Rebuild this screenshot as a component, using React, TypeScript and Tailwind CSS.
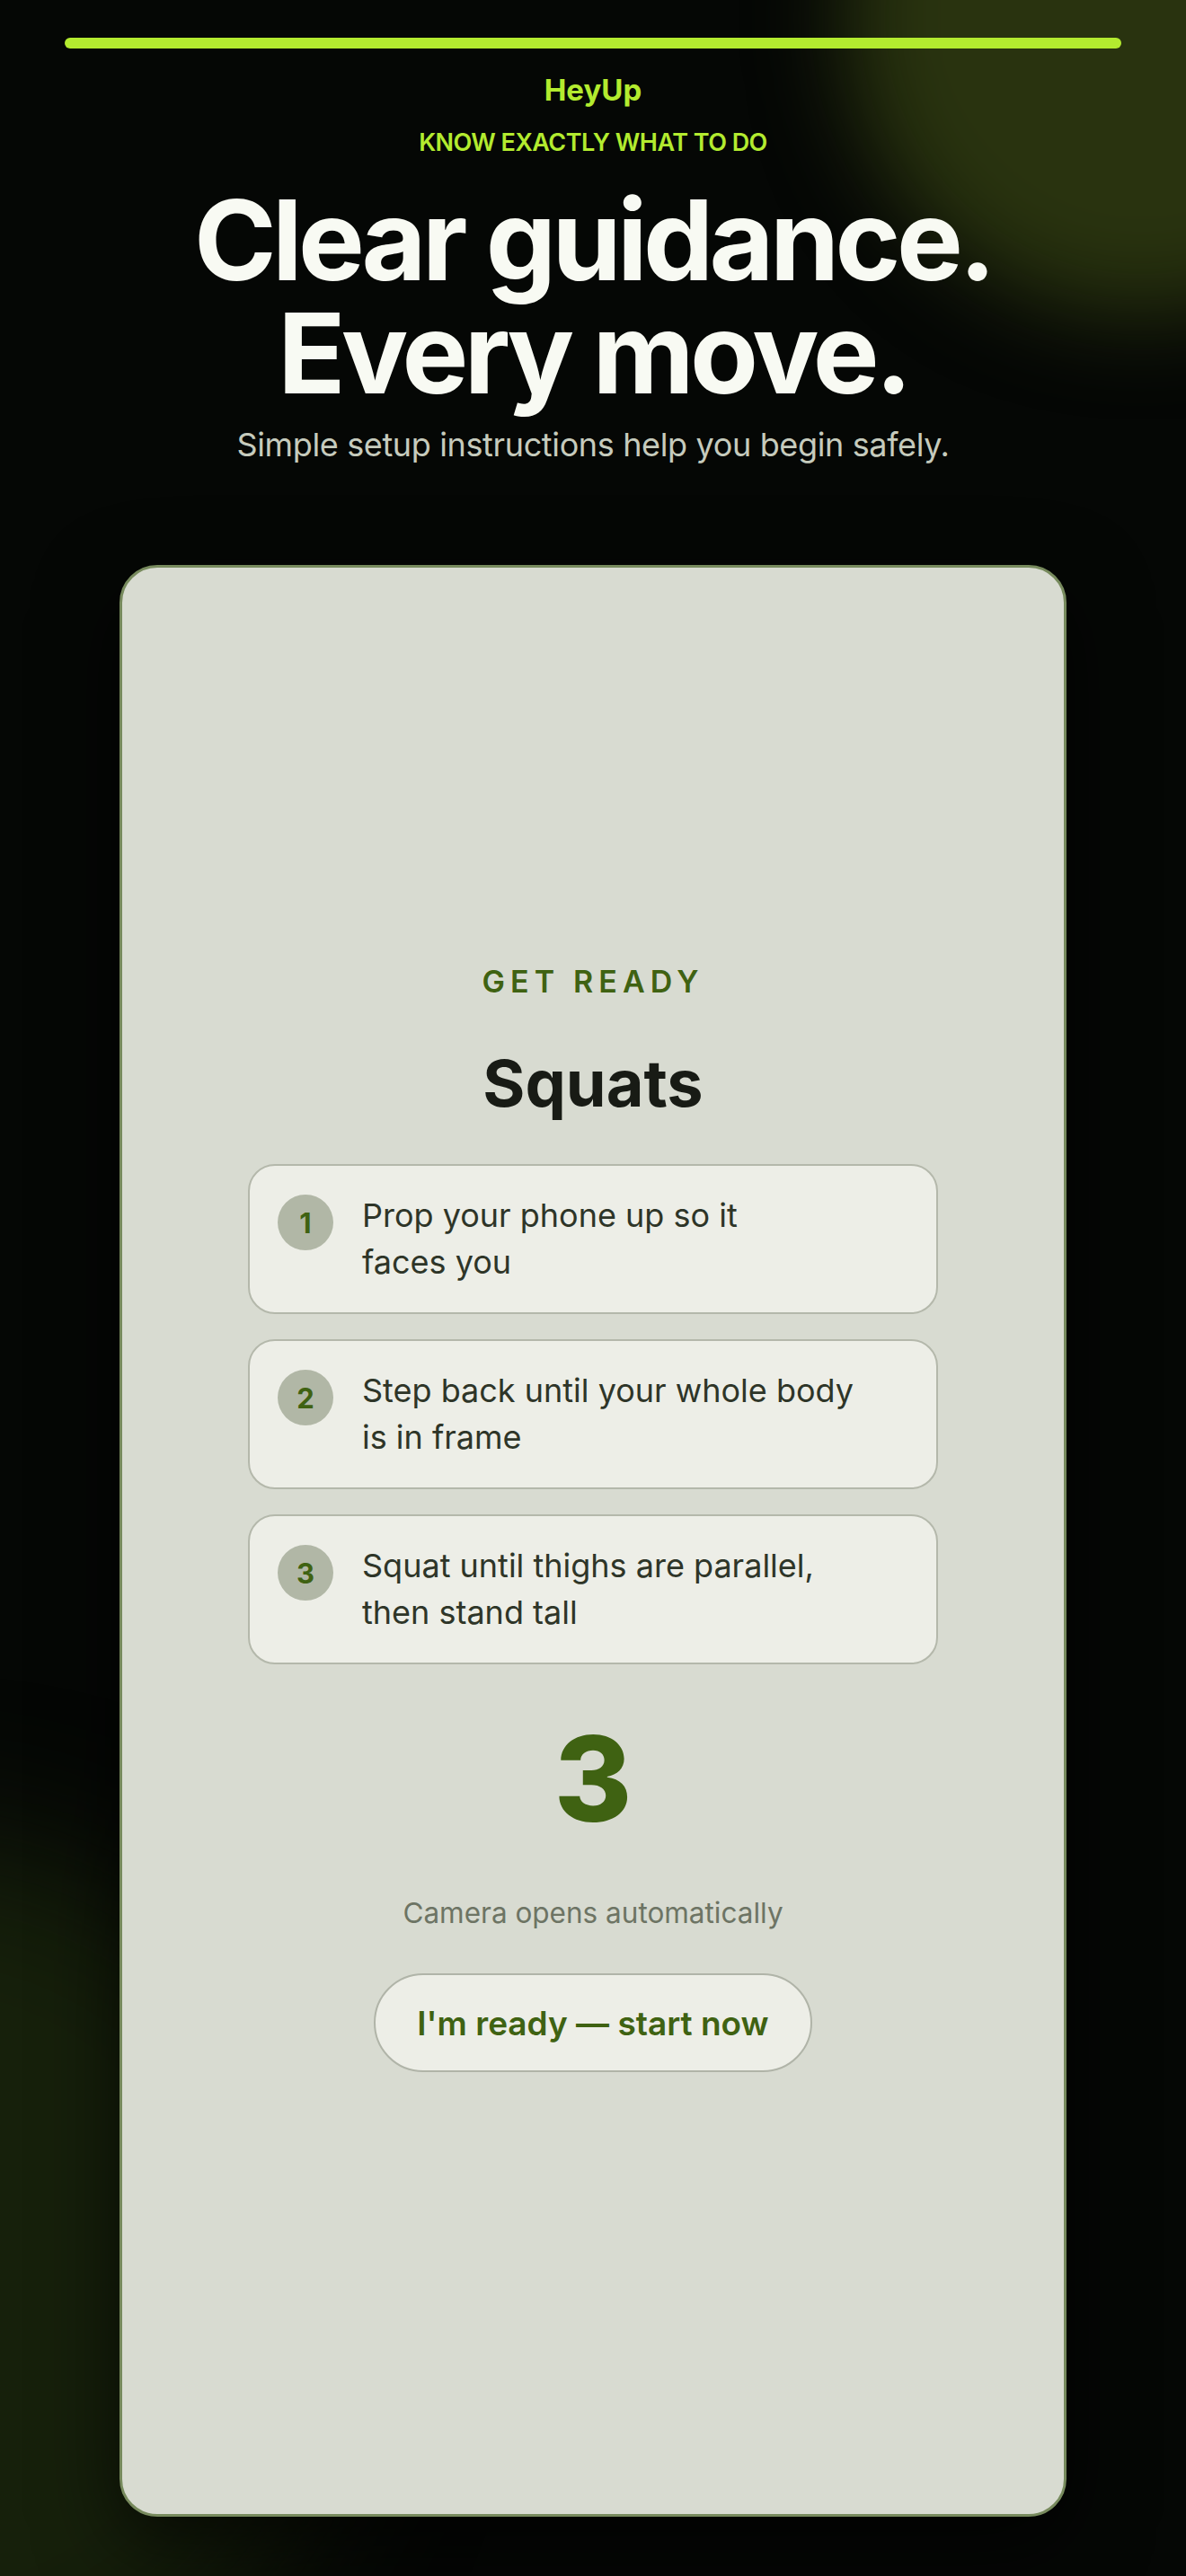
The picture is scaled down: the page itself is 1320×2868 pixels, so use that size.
import React from 'react';

const steps = [
  ['Prop your phone up so it', 'faces you'],
  ['Step back until your whole body', 'is in frame'],
  ['Squat until thighs are parallel,', 'then stand tall'],
];

function StepCard({ n, lines }: { n: number; lines: string[] }) {
  return (
    <div className="flex w-full items-start gap-[32px] rounded-[30px] border-2 border-[#b4b8ab] bg-[#edeee7] py-[29.5px] pr-[31px] pl-[31px]">
      <div className="mt-[3px] flex h-[62px] w-[62px] shrink-0 items-center justify-center rounded-full bg-[#b1b7a6] text-[31px] leading-none font-bold text-[#3f6212]">
        {n}
      </div>
      <p className="text-[36px] leading-[52px] text-[#2e3528]">
        {lines[0]}
        <br />
        {lines[1]}
      </p>
    </div>
  );
}

export default function App() {
  return (
    <div className="relative min-h-screen overflow-hidden bg-[#050705] font-[Inter,sans-serif]">
      {/* background glows */}
      <div className="pointer-events-none absolute -top-[310px] left-[940px] h-[660px] w-[660px] rounded-full bg-[#29330f] blur-[50px]" />
      <div className="pointer-events-none absolute top-[2050px] -left-[600px] h-[1000px] w-[1000px] rounded-full bg-[#16200b] blur-[80px]" />

      <div className="relative flex flex-col items-center px-[72px] pt-[42px] pb-[65px]">
        <div className="h-3 w-full rounded-full bg-[#b3eb2f]" />

        <div className="mt-[30px] text-[33px] leading-none font-bold text-[#b3eb2f]">HeyUp</div>
        <div className="mt-[28px] text-[27px] leading-none font-semibold tracking-[-0.02em] text-[#b3eb2f]">
          KNOW EXACTLY WHAT TO DO
        </div>

        <h1 className="mt-[32px] text-center text-[124px] leading-[1.02] font-bold tracking-[-0.037em] text-[#f8faf3]">
          Clear guidance.
          <br />
          Every move.
        </h1>
        <p className="mt-[20px] text-[36px] leading-none tracking-[-0.01em] text-[#c6cbbd]">
          Simple setup instructions help you begin safely.
        </p>

        {/* phone card */}
        <div className="mt-[116px] flex h-[2173px] w-[1054px] flex-col items-center justify-center rounded-[42px] border-[3px] border-[#778a5d] bg-[#d8dbd1] pb-12 shadow-[0_30px_90px_rgba(0,0,0,0.7)]">
          <div className="text-[34px] leading-none font-semibold tracking-[0.18em] text-[#3f6212]">GET READY</div>
          <h2 className="mt-[60px] text-[72px] leading-none font-bold text-[#181b15]">Squats</h2>

          <div className="mt-[54px] flex w-full max-w-3xl flex-col gap-[28px]">
            {steps.map((s, i) => (
              <StepCard key={i} n={i + 1} lines={s} />
            ))}
          </div>

          <div className="mt-[61px] text-[132px] leading-none font-extrabold text-[#3f6212]">3</div>
          <div className="mt-[68px] text-[31.5px] leading-none text-[#6d7464]">Camera opens automatically</div>

          <button className="mt-[52px] rounded-full border-2 border-[#b0b4a8] bg-[#edeee7] px-[46.5px] py-[34.5px] text-[37px] leading-none font-semibold text-[#3f6212]">
            I'm ready — start now
          </button>
        </div>
      </div>
    </div>
  );
}
